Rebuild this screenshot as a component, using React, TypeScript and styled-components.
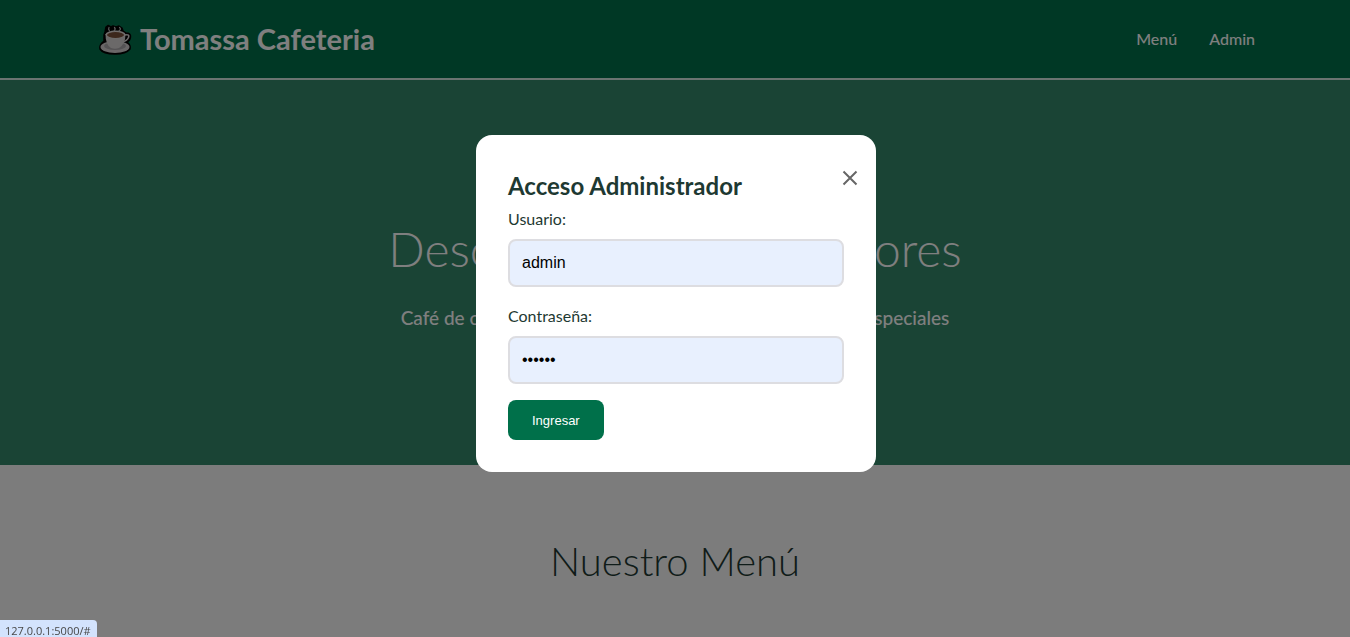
import React from "react";
import styled, { createGlobalStyle } from "styled-components";

const GlobalStyle = createGlobalStyle`
  *, *::before, *::after { box-sizing: border-box; margin: 0; padding: 0; }
  body {
    font-family: Lato, "Liberation Sans", sans-serif;
    font-size: 16px;
    line-height: 26px;
    color: #1e3932;
    background: #f9f9f9;
    overflow: hidden;
  }
`;

const Header = styled.header`
  background: #00704a;
  border-bottom: 2px solid #d4e9e2;
`;

const HeaderInner = styled.div`
  max-width: 1200px;
  margin: 0 auto;
  padding: 16px 20px;
  display: flex;
  align-items: center;
  justify-content: space-between;
`;

const Brand = styled.div`
  display: flex;
  align-items: center;
  gap: 8px;
  color: #fff;
  font-size: 29px;
  line-height: 46px;
  font-weight: 700;
`;

const CupIcon = styled.svg`
  width: 37px;
  height: 34px;
`;

const Nav = styled.nav`
  display: flex;
  gap: 32px;
`;

const NavLink = styled.a`
  color: #fff;
  font-weight: 500;
  text-decoration: none;
`;

const Hero = styled.section`
  padding: 130px 20px 129px;
  background: #34886a;
  color: #fff;
  text-align: center;
`;

const HeroTitle = styled.h1`
  font-size: 48px;
  line-height: 77px;
  font-weight: 300;
  margin-bottom: 13px;
`;

const HeroText = styled.p`
  font-size: 19px;
  line-height: 36px;
  font-weight: 500;
`;

const MenuSection = styled.section`
  padding: 64px 20px;
`;

const SectionTitle = styled.h2`
  font-size: 40px;
  line-height: 64px;
  font-weight: 300;
  text-align: center;
`;

const Overlay = styled.div`
  position: fixed;
  inset: 0;
  padding: 135px 0 0 2px;
  background: rgba(0, 0, 0, 0.5);
`;

const Dialog = styled.div`
  position: relative;
  width: 400px;
  max-width: 90%;
  margin: 0 auto;
  padding: 32px;
  border-radius: 16px;
  background: #fff;
`;

const CloseButton = styled.button`
  position: absolute;
  top: 32px;
  right: 16px;
  display: flex;
  padding: 2px 0;
  border: 0;
  background: none;
  color: #666;
  cursor: pointer;
`;

const DialogTitle = styled.h2`
  margin-bottom: 2px;
  font-size: 24px;
  line-height: 37px;
  font-weight: 700;
`;

const Field = styled.div`
  margin-bottom: 16px;
`;

const Label = styled.label`
  display: block;
  margin-bottom: 8px;
  line-height: 25px;
`;

const Input = styled.input`
  display: block;
  width: 100%;
  height: 48px;
  padding: 12px;
  border: 2px solid #dddde1;
  border-radius: 8px;
  background: #e8f0fe;
  color: #000;
  font: 16px "Liberation Sans", Arial, sans-serif;
`;

const SubmitButton = styled.button`
  height: 40px;
  padding: 0 24px;
  border: 0;
  border-radius: 8px;
  background: #00704a;
  color: #fff;
  font: 500 13px "Liberation Sans", Arial, sans-serif;
  cursor: pointer;
`;

const StatusBubble = styled.div`
  position: fixed;
  left: 0;
  bottom: 0;
  height: 17px;
  padding: 2px 6px 0 5px;
  border-top-right-radius: 4px;
  background: #d3e3fd;
  color: #474747;
  font: 11px/17px "Open Sans", "Noto Sans", sans-serif;
`;

function Cup() {
  return (
    <CupIcon viewBox="0 0 37 34" aria-hidden="true">
      <path
        d="M10 10 L11 5 L13 3.500 L16 5 L18 4 L21 5 L24 4 L27 6 L28 9 L31 11 Q36 11 35.500 15 Q35 19 32 20 Q36 23 35 27 Q31 32 20 32 Q8 32 5 27 Q4 23 9 19 L9 13 Z"
        fill="#000"
        stroke="#000"
        strokeWidth="1.500"
        strokeLinejoin="round"
      />
      <ellipse cx="20" cy="25" rx="14.500" ry="6" fill="#d4cfd0" />
      <ellipse cx="20" cy="24" rx="11" ry="4" fill="#aaa6aa" />
      <path d="M30 13 Q35 12 33.500 15.500 Q32 19 27 20" fill="none" stroke="#d8d4d5" strokeWidth="1.600" />
      <path d="M10.500 12 Q10.500 23 16 26 Q20 27.500 24 26 Q30.500 22 30.500 12 Z" fill="#d6d2d2" />
      <ellipse cx="20.500" cy="12.500" rx="10" ry="4" fill="#e0dad8" />
      <ellipse cx="20.500" cy="13" rx="8.500" ry="2.900" fill="#784e38" />
      <path
        d="M14.500 9 Q13 7 14 5.500 M19 9 Q21 7 19.500 5.500 M24 9 Q26.500 7 24.500 5.500"
        fill="none"
        stroke="#bbb"
        strokeWidth="1.200"
        strokeLinecap="round"
      />
    </CupIcon>
  );
}

export default function App() {
  return (
    <>
      <GlobalStyle />
      <Header>
        <HeaderInner>
          <Brand>
            <Cup />
            Tomassa Cafeteria
          </Brand>
          <Nav>
            <NavLink href="#menu">Menú</NavLink>
            <NavLink href="#">Admin</NavLink>
          </Nav>
        </HeaderInner>
      </Header>
      <main>
        <Hero>
          <HeroTitle>Descubre Nuestros Sabores</HeroTitle>
          <HeroText>Café de calidad premium, postres artesanales y bebidas especiales</HeroText>
        </Hero>
        <MenuSection id="menu">
          <SectionTitle>Nuestro Menú</SectionTitle>
        </MenuSection>
      </main>
      <Overlay>
        <Dialog role="dialog" aria-modal="true" aria-labelledby="login-title">
          <CloseButton type="button" aria-label="Cerrar">
            <svg width="20" height="18" viewBox="0 0 20 18" fill="none" stroke="currentColor" strokeWidth="2">
              <path d="M3.500 2.500 L16.500 15.500 M16.500 2.500 L3.500 15.500" />
            </svg>
          </CloseButton>
          <DialogTitle id="login-title">Acceso Administrador</DialogTitle>
          <form onSubmit={(e) => e.preventDefault()}>
            <Field>
              <Label htmlFor="user">Usuario:</Label>
              <Input id="user" type="text" defaultValue="admin" />
            </Field>
            <Field>
              <Label htmlFor="password">Contraseña:</Label>
              <Input id="password" type="password" defaultValue="123456" />
            </Field>
            <SubmitButton type="submit">Ingresar</SubmitButton>
          </form>
        </Dialog>
      </Overlay>
      <StatusBubble>127.0.0.1:5000/#</StatusBubble>
    </>
  );
}
